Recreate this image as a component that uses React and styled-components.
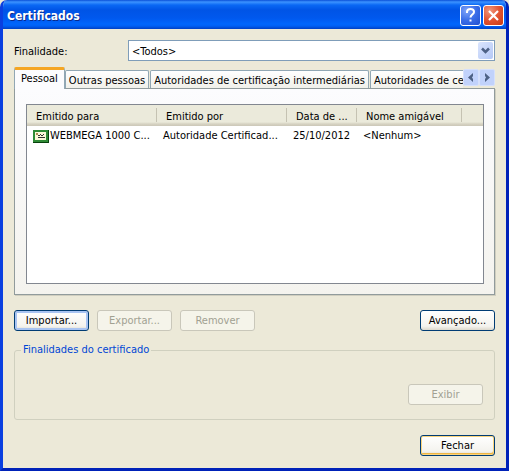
import React, { useState } from 'react';
import styled, { createGlobalStyle, css } from 'styled-components';

const GlobalStyle = createGlobalStyle`
  * {
    box-sizing: border-box;
  }

  body {
    margin: 0;
    background: #ece9d8;
  }

  body, button, select {
    font-family: "DejaVu Sans Condensed", "Liberation Sans", sans-serif;
    font-size: 11px;
    line-height: 14px;
    color: #000;
  }
`;

const Window = styled.main`
  display: flex;
  flex-direction: column;
  min-height: 100vh;
  background: #ece9d8;
  border: 3px solid #0a3fe0;
  border-top: 0;
  border-right-color: #0022b8;
  border-bottom-color: #0022b8;
  border-radius: 7px 7px 0 0;
  overflow: hidden;
`;

const TitleBar = styled.header`
  display: flex;
  align-items: center;
  gap: 2px;
  height: 29px;
  margin: 0 -3px;
  padding: 2px 5px 0 7px;
  background: linear-gradient(
    #0a50d8 0,
    #3c93ff 2px,
    #0a68f4 5px,
    #0054e6 10px,
    #0058ee 18px,
    #0066fc 24px,
    #0060f4 26px,
    #0040c4 29px
  );
`;

const Title = styled.h1`
  flex: 1;
  margin: 0;
  color: #fff;
  font-size: 12px;
  line-height: 18px;
  text-shadow: 1px 1px 0 #0a2a8c;
`;

const CaptionButton = styled.button`
  display: grid;
  place-items: center;
  width: 21px;
  height: 21px;
  padding: 0;
  border: 1px solid #fff;
  border-radius: 3px;
  background: ${props =>
    props.$close
      ? 'radial-gradient(circle at 30% 25%, #f0977c, #e25331 50%, #c83a12)'
      : 'radial-gradient(circle at 30% 25%, #7fa4f8, #3a6de8 50%, #1f50cf)'};
`;

const Content = styled.div`
  flex: 1;
  padding: 11px 11px 12px;
`;

const PurposeRow = styled.div`
  display: flex;
  align-items: center;
`;

const PurposeLabel = styled.label`
  width: 114px;
  padding-top: 2px;
`;

const SelectBox = styled.div`
  position: relative;
  flex: 1;
`;

const Select = styled.select`
  display: block;
  width: 100%;
  height: 21px;
  padding: 2px 20px 0 3px;
  appearance: none;
  border: 1px solid #7f9db9;
  border-radius: 0;
  background: #fff;
`;

const SelectArrow = styled.span`
  position: absolute;
  top: 2px;
  right: 2px;
  display: grid;
  place-items: center;
  width: 15px;
  height: 17px;
  border-radius: 2px;
  background: linear-gradient(135deg, #dbe5fd, #b4c8f6);
  pointer-events: none;
`;

const TabStrip = styled.div`
  display: flex;
  align-items: flex-end;
  height: 21px;
  margin-top: 6px;
`;

const TabList = styled.div`
  display: flex;
  flex: 1;
  align-items: flex-end;
  min-width: 0;
  height: 22px;
  margin-bottom: -1px;
  overflow: hidden;
`;

const Tab = styled.button`
  flex: none;
  height: 18px;
  margin: 0 1px 1px 0;
  padding: 2px 3px 0;
  border: 1px solid #91a7b4;
  border-bottom: 0;
  border-radius: 2px 2px 0 0;
  background: linear-gradient(#fff, #f0f0ea);
  white-space: nowrap;

  ${props =>
    props.$selected &&
    css`
      position: relative;
      height: 22px;
      margin: 0;
      padding: 0 6px 2px;
      border-top: 3px solid #f5a623;
      background: #fcfcfe;
    `}
`;

const Scroller = styled.div`
  display: flex;
  height: 17px;
  margin-bottom: 2px;
`;

const ScrollButton = styled.button`
  display: grid;
  place-items: center;
  width: 16px;
  padding: 0;
  border: 1px solid #d5e0fc;
  border-radius: 2px;
  background: #c1d2fb;
`;

const TabPanel = styled.section`
  padding: 15px 10px 10px 11px;
  border: 1px solid #919b9c;
  background: linear-gradient(#fcfcfe, #f4f3ee);
  box-shadow: 1px 1px 0 #d0cebf;
`;

const ListView = styled.div`
  height: 180px;
  border: 1px solid #828790;
  background: #fff;
  overflow: hidden;
`;

const Table = styled.table`
  width: 100%;
  table-layout: fixed;
  border-collapse: separate;
  border-spacing: 0;
`;

const HeaderCell = styled.th`
  height: 21px;
  padding: 2px 0 0 9px;
  background:
    linear-gradient(#c5c2b2, #c5c2b2) right 3px / 1px 14px no-repeat,
    linear-gradient(#ebeadb 0 17px, #d6d2c2 19px, #cbc7b8 21px);
  font-weight: normal;
  text-align: left;
  white-space: nowrap;

  &:last-child {
    background: linear-gradient(#ebeadb 0 17px, #d6d2c2 19px, #cbc7b8 21px);
  }
`;

const Cell = styled.td`
  height: 18px;
  padding: 2px 0 0 6px;
  white-space: nowrap;
`;

const CellIcon = styled.span`
  display: flex;
  align-items: center;
  gap: 1px;
`;

const ButtonRow = styled.div`
  display: flex;
  gap: 8px;
  margin-top: 15px;
`;

const Button = styled.button`
  width: 75px;
  height: 21px;
  padding: 0;
  border: 1px solid #003c74;
  border-radius: 3px;
  background: linear-gradient(#fff, #f4f3ee 80%, #dcd8cc);
  box-shadow: ${props => {
    if (props.$focused) return 'inset 0 0 0 2px #a9c4f2';
    if (props.$hot) return 'inset 0 0 0 1px #fbd47c, inset -1px -2px 0 #eeb544';
    return 'none';
  }};
  margin-left: ${props => (props.$end ? 'auto' : '0')};

  &:disabled {
    border-color: #c9c7ba;
    background: #f5f4ea;
    color: #a1a192;
  }
`;

const Group = styled.fieldset`
  display: flex;
  justify-content: flex-end;
  min-width: 0;
  margin: 12px 0 0;
  padding: 27px 11px 14px;
  border: 1px solid #d0d0bf;
  border-radius: 3px;
`;

const Legend = styled.legend`
  margin-left: -5px;
  padding: 0 2px;
  color: #0046d5;
`;

const TABS = [
  'Pessoal',
  'Outras pessoas',
  'Autoridades de certificação intermediárias',
  'Autoridades de certificação',
];

const COLUMNS = [
  { label: 'Emitido para', width: 130 },
  { label: 'Emitido por', width: 130 },
  { label: 'Data de ...', width: 70 },
  { label: 'Nome amigável', width: 105 },
];

function CertificateIcon() {
  return (
    <svg width="16" height="13" viewBox="0 0 16 13" aria-hidden="true">
      <path d="M0 0h16v13H0z" fill="#06420c" />
      <path d="M0 0h15v12H0z" fill="#2f8a35" />
      <path d="M2 2h11v8H2z" fill="#fbf8d8" />
      <path d="M3 3h2v2H3z" fill="#b08a50" />
      <path
        d="M5 5.500h2M7 4.500h1M8 5.500h2M10 4.500h1M5 7.500h7"
        fill="none"
        stroke="#333"
      />
    </svg>
  );
}

function Chevron() {
  return (
    <svg width="9" height="9" viewBox="0 0 9 9" aria-hidden="true">
      <path
        d="M1 2.500l3.500 3.500L8 2.500"
        fill="none"
        stroke="#4d6185"
        strokeWidth="2.500"
      />
    </svg>
  );
}

function ScrollArrow({ points }) {
  return (
    <svg width="8" height="9" viewBox="0 0 8 9" aria-hidden="true">
      <path d={points} fill="#4d6185" />
    </svg>
  );
}

function App() {
  const [selected, setSelected] = useState(0);

  return (
    <>
      <GlobalStyle />
      <Window>
        <TitleBar>
          <Title>Certificados</Title>
          <CaptionButton type="button" aria-label="Ajuda">
            <svg width="15" height="17" viewBox="0 0 15 17" aria-hidden="true">
              <path
                d="M4 6V5c0-2 1.500-3 3.500-3S11 3.200 11 5c0 2.500-3.500 2.700-3.500 5.500"
                fill="none"
                stroke="#fff"
                strokeWidth="2"
              />
              <path d="M6.500 12.500h2v2h-2z" fill="#fff" />
            </svg>
          </CaptionButton>
          <CaptionButton type="button" aria-label="Fechar janela" $close>
            <svg width="13" height="13" viewBox="0 0 13 13" aria-hidden="true">
              <path d="M2 2l9 9M11 2l-9 9" stroke="#fff" strokeWidth="2.200" />
            </svg>
          </CaptionButton>
        </TitleBar>
        <Content>
          <PurposeRow>
            <PurposeLabel htmlFor="purpose">Finalidade:</PurposeLabel>
            <SelectBox>
              <Select id="purpose">
                <option>&lt;Todos&gt;</option>
              </Select>
              <SelectArrow>
                <Chevron />
              </SelectArrow>
            </SelectBox>
          </PurposeRow>

          <TabStrip>
            <TabList role="tablist">
              {TABS.map((tab, index) => (
                <Tab
                  key={tab}
                  type="button"
                  role="tab"
                  aria-selected={index === selected}
                  $selected={index === selected}
                  onClick={() => setSelected(index)}
                >
                  {tab}
                </Tab>
              ))}
            </TabList>
            <Scroller>
              <ScrollButton type="button" aria-label="Guias anteriores">
                <ScrollArrow points="M6 0v3L5 4.500 6 6v3L1 4.500z" />
              </ScrollButton>
              <ScrollButton type="button" aria-label="Próximas guias">
                <ScrollArrow points="M2 0v3l1 1.500L2 6v3l5-4.500z" />
              </ScrollButton>
            </Scroller>
          </TabStrip>

          <TabPanel role="tabpanel">
            <ListView>
              <Table>
                <colgroup>
                  {COLUMNS.map(column => (
                    <col key={column.label} style={{ width: column.width }} />
                  ))}
                  <col />
                </colgroup>
                <thead>
                  <tr>
                    {COLUMNS.map(column => (
                      <HeaderCell key={column.label}>{column.label}</HeaderCell>
                    ))}
                    <HeaderCell />
                  </tr>
                </thead>
                <tbody>
                  <tr>
                    <Cell>
                      <CellIcon>
                        <CertificateIcon />
                        WEBMEGA 1000 C...
                      </CellIcon>
                    </Cell>
                    <Cell>Autoridade Certificad...</Cell>
                    <Cell>25/10/2012</Cell>
                    <Cell>&lt;Nenhum&gt;</Cell>
                    <Cell />
                  </tr>
                </tbody>
              </Table>
            </ListView>
          </TabPanel>

          <ButtonRow>
            <Button type="button" $focused>
              Importar...
            </Button>
            <Button type="button" disabled>
              Exportar...
            </Button>
            <Button type="button" disabled>
              Remover
            </Button>
            <Button type="button" $end>
              Avançado...
            </Button>
          </ButtonRow>

          <Group>
            <Legend>Finalidades do certificado</Legend>
            <Button type="button" disabled>
              Exibir
            </Button>
          </Group>

          <ButtonRow>
            <Button type="button" $hot $end>
              Fechar
            </Button>
          </ButtonRow>
        </Content>
      </Window>
    </>
  );
}

export default App;
